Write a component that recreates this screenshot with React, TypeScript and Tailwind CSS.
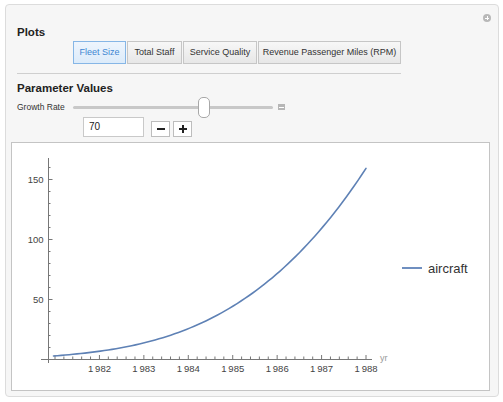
import React from "react";

function curvePath() {
  const d1 = -10.3;
  const d2 = -16.4;
  const d3 = -12;
  const pts: string[] = [];
  const n = 80;
  for (let i = 0; i <= n; i++) {
    const u = (4 * i) / n;
    const x = 53.5 + u * 78.125;
    const y = 356 + d1 * u + (d2 * u * (u - 1)) / 2 + (d3 * u * (u - 1) * (u - 2)) / 6;
    pts.push(`${x.toFixed(2)},${y.toFixed(2)}`);
  }
  return "M" + pts.join(" L");
}

const FONT = "Liberation Sans, Arial, sans-serif";

function Plot() {
  const x0 = 55;
  const step = 44.43;
  const xTicks: React.ReactNode[] = [];
  for (let i = 0; i <= 35; i++) {
    const x = x0 + (i * step) / 5;
    if (x > 367) break;
    const major = i % 5 === 0;
    xTicks.push(
      <line
        key={"xt" + i}
        x1={x}
        x2={x}
        y1={359}
        y2={major ? 355 : 356.5}
        stroke="#777"
        strokeWidth={1}
      />
    );
  }
  const years = [1982, 1983, 1984, 1985, 1986, 1987, 1988];
  const yTicks: React.ReactNode[] = [];
  for (let v = 10; v <= 160; v += 10) {
    const y = 359.5 - v * 1.2;
    const major = v % 50 === 0;
    yTicks.push(
      <line
        key={"yt" + v}
        x1={48}
        x2={major ? 52.5 : 50.5}
        y1={y}
        y2={y}
        stroke="#777"
        strokeWidth={1}
      />
    );
  }
  return (
    <svg width={477} height={247} viewBox="12 143 477 247" className="block">
      <line x1={41} y1={359.5} x2={372} y2={359.5} stroke="#777" strokeWidth={1} />
      <line x1={48.5} y1={158} x2={48.5} y2={363} stroke="#777" strokeWidth={1} />
      {xTicks}
      {yTicks}
      {years.map((yr, i) => (
        <text
          key={yr}
          x={x0 + (i + 1) * step}
          y={372}
          textAnchor="middle"
          fontFamily={FONT}
          fontSize={9.5}
          fill="#444"
        >
          {"1\u2009" + String(yr).slice(1)}
        </text>
      ))}
      {[50, 100, 150].map((v) => (
        <text
          key={v}
          x={43.5}
          y={359.5 - v * 1.2 + 3.4}
          textAnchor="end"
          fontFamily={FONT}
          fontSize={9.5}
          fill="#444"
        >
          {v}
        </text>
      ))}
      <text x={380} y={361} fontFamily={FONT} fontSize={9} fill="#999">
        yr
      </text>
      <path
        d={curvePath()}
        fill="none"
        stroke="#5e81b5"
        strokeWidth={1.6}
        strokeLinejoin="round"
        strokeLinecap="round"
      />
      <line x1={402} y1={268} x2={422} y2={268} stroke="#6f8fc0" strokeWidth={2} />
      <text x={428} y={272.5} fontFamily={FONT} fontSize={13} fill="#333">
        aircraft
      </text>
    </svg>
  );
}

function TabButton({ label, w, selected }: { label: string; w: string; selected?: boolean }) {
  return (
    <div
      className={
        selected
          ? `${w} h-[23px] flex items-center justify-center border border-[#86b6e6] bg-gradient-to-b from-[#eef5fd] to-[#dcebfa] text-[#3d86d2] text-[9px] leading-none`
          : `${w} h-[23px] flex items-center justify-center border border-[#c6c6c6] bg-gradient-to-b from-[#f7f7f7] to-[#e7e7e7] text-[#333] text-[9px] leading-none`
      }
    >
      {label}
    </div>
  );
}

export default function App() {
  return (
    <div className="w-[503px] h-[402px] bg-white overflow-hidden font-['Liberation_Sans',Arial,sans-serif] pt-[4px] pl-[5px]">
      <div className="relative w-[494px] h-[393px] border border-[#dcdcdc] rounded-[4px] bg-[#f6f6f6]">
        <div className="absolute right-[7px] top-[9px] w-[8px] h-[8px] rounded-full bg-[#b8b8b8] flex items-center justify-center">
          <div className="relative w-[4px] h-[4px]">
            <div className="absolute left-0 top-[1.5px] w-[4px] h-[1px] bg-white" />
            <div className="absolute top-0 left-[1.5px] w-[1px] h-[4px] bg-white" />
          </div>
        </div>
        <div className="pl-[11px] pt-[20px]">
          <div className="h-[14px] leading-[14px] text-[11.5px] font-bold text-[#222]">Plots</div>
          <div className="mt-[2px] ml-[56px] flex gap-px">
            <TabButton label="Fleet Size" w="w-[53px]" selected />
            <TabButton label="Total Staff" w="w-[55px]" />
            <TabButton label="Service Quality" w="w-[74px]" />
            <TabButton label="Revenue Passenger Miles (RPM)" w="w-[143px]" />
          </div>
          <div className="mt-[9px] w-[384px] h-px bg-[#cfcfcf]" />
          <div className="mt-[7px] h-[14px] leading-[14px] text-[11.5px] font-bold text-[#222]">
            Parameter Values
          </div>
          <div className="mt-px h-[22px] flex items-center">
            <div className="w-[56px] text-[8.5px] text-[#333] leading-none">Growth Rate</div>
            <div className="relative w-[200px] h-[3px] bg-[#c8c8c8] rounded-full">
              <div className="absolute left-[125px] top-[-9px] w-[12px] h-[21px] rounded-[5px] bg-white border border-[#a8a8a8]" />
            </div>
            <div className="ml-[5px] w-[7px] h-[6px] bg-[#b6b6b6] flex items-center justify-center">
              <div className="w-[5px] h-px bg-white" />
            </div>
          </div>
          <div className="-mt-px ml-[66px] flex items-center">
            <div className="w-[61px] h-[20px] bg-white border border-[#c9c9c9] text-[10px] text-[#222] pl-[5px] flex items-center leading-none">
              70
            </div>
            <div className="ml-[7px] mt-[3px] w-[19px] h-[16px] bg-white border border-[#bdbdbd] flex items-center justify-center">
              <div className="w-[8px] h-[2px] bg-[#222]" />
            </div>
            <div className="ml-[3px] mt-[3px] w-[19px] h-[16px] bg-white border border-[#bdbdbd] flex items-center justify-center">
              <div className="relative w-[8px] h-[8px]">
                <div className="absolute left-0 top-[3px] w-[8px] h-[2px] bg-[#222]" />
                <div className="absolute top-0 left-[3px] w-[2px] h-[8px] bg-[#222]" />
              </div>
            </div>
          </div>
        </div>
        <div className="mt-[5px] ml-[5px] w-[479px] h-[249px] border border-[#c4c4c4] bg-white">
          <Plot />
        </div>
      </div>
    </div>
  );
}
